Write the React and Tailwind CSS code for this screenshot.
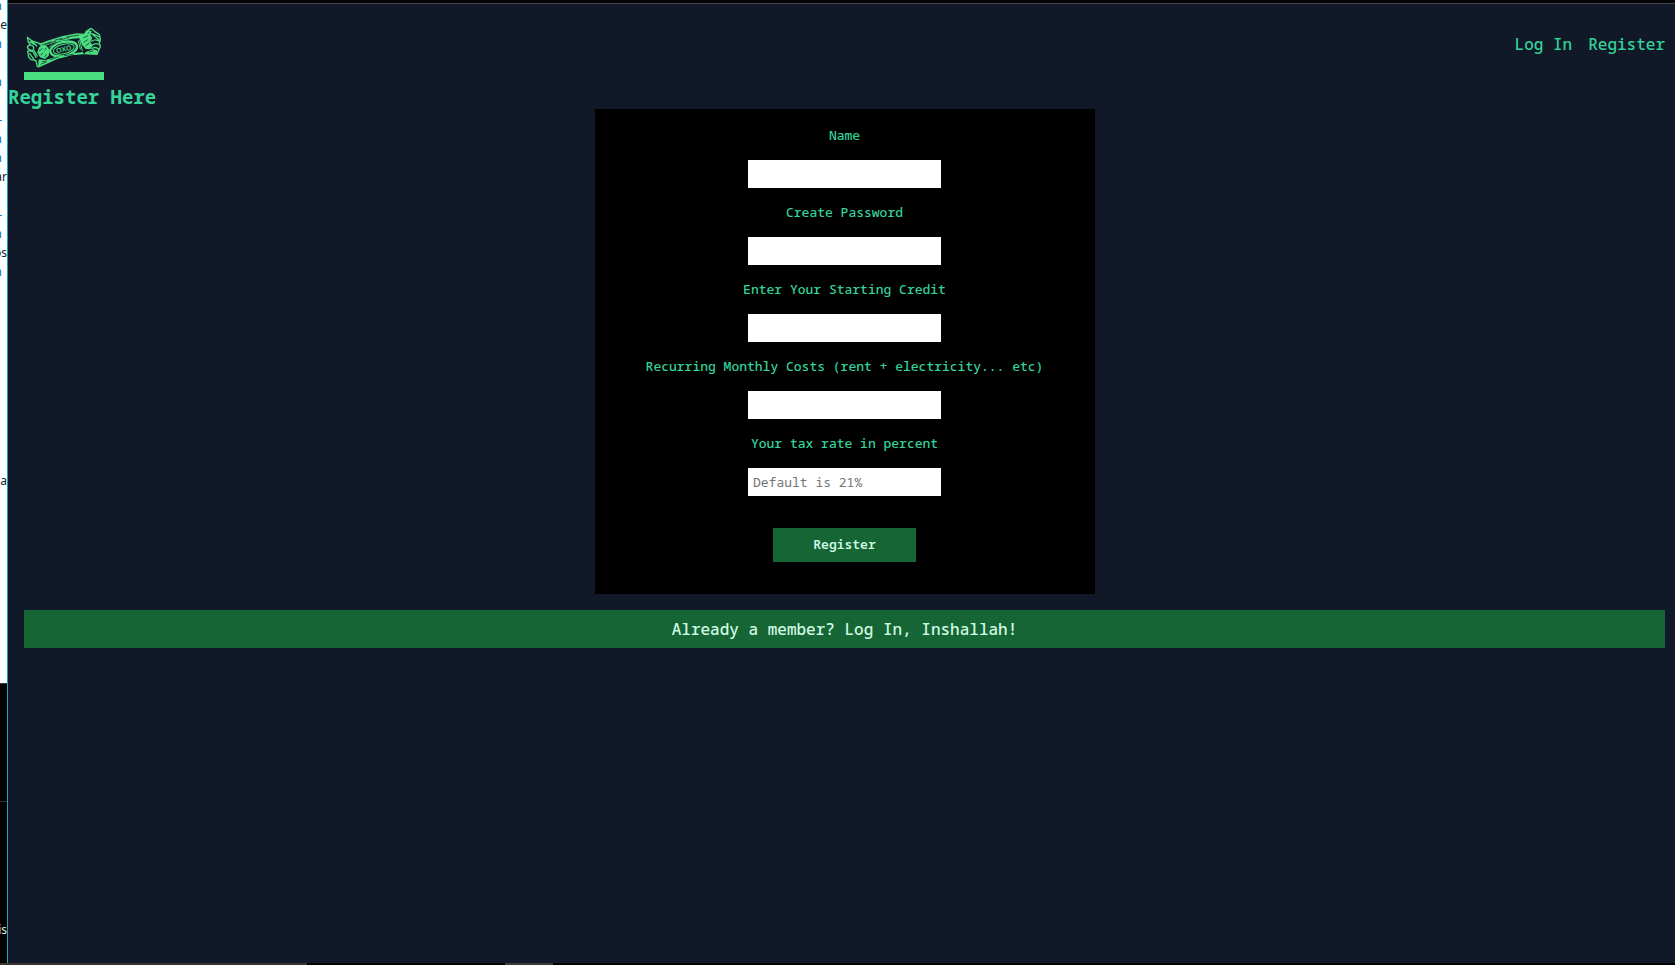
import React from "react";

const editorLines = [
  "n", "ue", "n", "", "n", "", "-", "n", "n", "ar", "", "-", "n", "os", "n",
  "", "", "", "", "", "", "", "", "", "", "na",
];

const fields = [
  { id: "name", label: "Name", type: "text" },
  { id: "password", label: "Create Password", type: "password" },
  { id: "credit", label: "Enter Your Starting Credit", type: "text" },
  { id: "costs", label: "Recurring Monthly Costs (rent + electricity... etc)", type: "text" },
  { id: "tax", label: "Your tax rate in percent", type: "text", placeholder: "Default is 21%" },
];

function CandyLogo() {
  return (
    <svg viewBox="12 0 240 156" className="block h-[52px] w-20" aria-hidden="true">
      <g fill="#4ade80">
        <path d="M56 72 L82 62 L125 49 L170 40 L191 41 L186 54 L157 56 L110 66 L66 80Z" />
        <path d="M54 143 L78 133 L112 117 L153 106 L193 103 L188 96 L144 102 L109 110 L77 120 L56 118Z" />
        <path d="M57 82 L68 74 L80 78 L89 90 L86 107 L75 117 L60 112 L52 97Z" />
        <path d="M178 54 L191 41 L203 30 L215 33 L211 44 L217 54 L211 65 L218 78 L210 88 L197 87 L186 74Z" />
        <path d="M197 96 L220 88 L232 91 L232 105 L193 103Z" />
      </g>
      <g fill="none" stroke="#4ade80" strokeWidth="4" strokeLinejoin="round" strokeLinecap="round">
        <path d="M22 52 L36 63 L60 71 M22 52 L25 66 L33 76 M22 82 Q26 72 37 77 Q45 83 38 91 Q26 93 22 82 M23 94 Q29 90 40 96 L48 112 M23 94 L26 111 L33 119 L48 122 L52 140" />
        <path d="M30 65 L43 73 M34 61 L50 78 M42 92 L52 108 M29 101 L42 118" />
        <path d="M198 35 L213 25 L224 34 L238 44 L241 57 L238 70 L241 80 L236 91 L231 103" />
        <path d="M206 38 L226 45 L236 50 M218 44 L238 60 M215 64 Q226 55 240 65 M216 76 Q227 66 240 75 M215 86 Q226 78 237 88" />
        <path d="M96 74 L88 82 M175 63 L181 87 M179 60 L187 92" strokeWidth="3" />
      </g>
      <ellipse cx="131" cy="87" rx="41" ry="21" transform="rotate(-13 131 87)" fill="#111827" stroke="#4ade80" strokeWidth="7" />
      <ellipse cx="131" cy="87" rx="32" ry="14" transform="rotate(-13 131 87)" fill="none" stroke="#4ade80" strokeWidth="3" />
      <text
        x="131"
        y="95"
        textAnchor="middle"
        transform="rotate(-13 131 87)"
        fill="#4ade80"
        className="font-['Liberation_Sans',sans-serif] text-[21px] font-bold"
      >
        OXO
      </text>
      <g stroke="#111827" strokeWidth="2" fill="none">
        <path d="M66 75 L94 65 M104 61 L126 55 M140 51 L177 45 M75 74 L108 63 M119 60 L148 52 M62 133 L80 125 M91 119 L116 110 M132 107 L160 103 M66 125 L79 123" />
        <path d="M57 93 L68 85 M62 106 L69 98 M79 83 L74 91 M73 111 L80 102 M190 54 L204 47 M191 67 L203 59 M197 78 L209 68 M203 40 L209 36 M206 96 L220 93" />
      </g>
    </svg>
  );
}

function EditorEdge() {
  return (
    <aside className="flex w-2 shrink-0 flex-col overflow-hidden border-r border-[#1aa3bd] bg-black font-['Noto_Sans',sans-serif] text-xs leading-[19px]">
      <div className="flex h-[71%] flex-col overflow-hidden border-b border-[#333333] bg-white">
        <div className="-mt-1 flex flex-col">
          {editorLines.map((line, i) => (
            <div
              key={i}
              className={
                line.length > 1
                  ? "flex h-[19px] shrink-0 justify-end text-[#202020]"
                  : "flex h-[19px] shrink-0 justify-end pr-[5px] text-[#0066b8]"
              }
            >
              {line}
            </div>
          ))}
        </div>
      </div>
      <div className="h-[118px] shrink-0 border-b border-[#333333]" />
      <div className="flex justify-end pt-[118px] text-[#e5e5e5]">tis</div>
    </aside>
  );
}

export default function App() {
  return (
    <div className="flex h-screen min-h-[700px] flex-col overflow-hidden bg-[#111827] font-['Noto_Sans_Mono','Noto_Sans_Mono_CJK_SC','DejaVu_Sans_Mono',monospace]">
      <div className="flex min-h-0 flex-1">
        <EditorEdge />
        <div className="flex min-w-0 flex-1 flex-col">
          <div className="h-1 shrink-0 border-b border-[#44474d] bg-[#050508]" />
          <header className="flex items-start justify-between pt-4 pr-[10px] pl-4">
            <a href="#home" aria-label="Home" className="block border-b-8 border-[#4ade80]">
              <CandyLogo />
            </a>
            <nav className="flex gap-4 pt-3 text-base leading-6 font-medium text-[#34d399]">
              <a href="#login">Log In</a>
              <a href="#register">Register</a>
            </nav>
          </header>
          <h1 className="pt-[5px] text-[19px] leading-6 font-bold text-[#34d399]">Register Here</h1>
          <main className="flex flex-col items-center gap-4 pr-[10px] pl-4">
            <form
              onSubmit={(e) => e.preventDefault()}
              className="flex w-full max-w-[500px] flex-col items-center gap-4 bg-black pt-[18px] pb-8"
            >
              {fields.map((f) => (
                <div key={f.id} className="flex flex-col items-center gap-4">
                  <label htmlFor={f.id} className="text-[13px] leading-[17px] font-medium text-[#34d399]">
                    {f.label}
                  </label>
                  <input
                    id={f.id}
                    type={f.type}
                    placeholder={f.placeholder}
                    className="h-7 w-[193px] bg-white px-[5px] text-[13px] text-black placeholder:text-[#757575]"
                  />
                </div>
              ))}
              <button type="submit" className="mt-4 h-[34px] w-[143px] bg-[#166534] text-[13px] font-semibold text-[#d1fae5]">
                Register
              </button>
            </form>
            <a href="#login" className="block w-full bg-[#166534] py-[7px] text-center text-base leading-6 font-medium text-[#d1fae5]">
              Already a member? Log In, Inshallah!
            </a>
          </main>
        </div>
      </div>
      <div className="flex h-[2px] shrink-0 bg-black">
        <div className="w-[307px] bg-[#3a3535]" />
        <div className="ml-[198px] w-12 bg-[#3a3a3a]" />
      </div>
    </div>
  );
}
